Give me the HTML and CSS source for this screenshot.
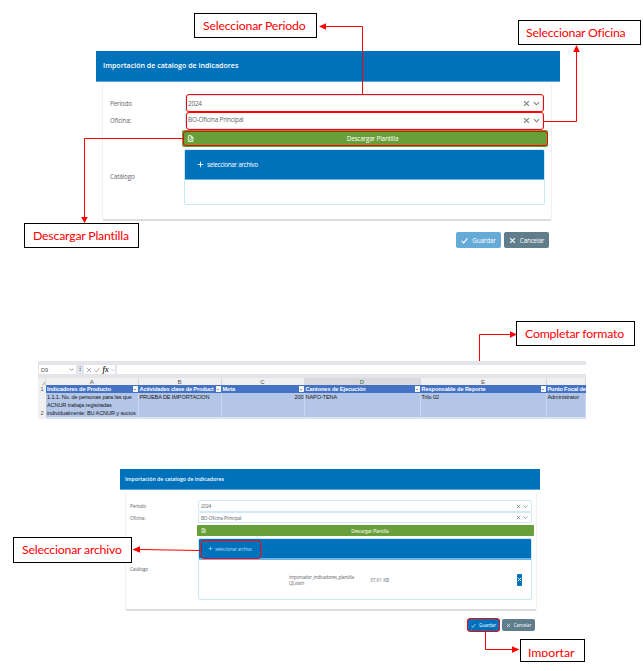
FILE: index.html
```html
<!DOCTYPE html>
<html lang="es">
<head>
<meta charset="utf-8">
<title>Importación de catalogo de indicadores</title>
<link rel="stylesheet" href="styles.css">
</head>
<body>
<svg class="defs" width="0" height="0">
  <symbol id="x" viewBox="0 0 8 8"><path d="M1.2 1.2 6.8 6.8M6.8 1.2 1.2 6.8"/></symbol>
  <symbol id="down" viewBox="0 0 8 8"><path d="M1 2.5 4 5.5 7 2.5"/></symbol>
  <symbol id="check" viewBox="0 0 8 8"><path d="M.8 4.5 3 6.7 7.4 1.5"/></symbol>
  <symbol id="plus" viewBox="0 0 8 8"><path d="M4 .8V7.2M.8 4H7.2"/></symbol>
  <symbol id="file" viewBox="0 0 8 8"><path d="M1.5.8H4.8L6.8 2.8V7.3H1.5ZM4.7.8V3H6.8M3 3.8 5.2 6.3M5.2 3.8 3 6.3"/></symbol>
</svg>
<main class="page">
  <section class="form form-lg">
    <header class="title"><span>Importación de catalogo de indicadores</span></header>
    <div class="card">
      <div class="row"><label>Periodo</label><div class="select"><span class="val-year">2024</span><svg><use href="#x"/></svg><svg><use href="#down"/></svg></div></div>
      <div class="row"><label>Oficina:</label><div class="select"><span class="val-office">BO-Oficina Principal</span><svg><use href="#x"/></svg><svg><use href="#down"/></svg></div></div>
      <div class="download"><svg><use href="#file"/></svg><span>Descargar Plantilla</span></div>
      <div class="row upload-row"><label>Catálogo</label>
        <div class="upload"><div class="upload-head"><svg><use href="#plus"/></svg><span>seleccionar archivo</span></div><div class="upload-body"></div></div>
      </div>
    </div>
    <footer><button class="save"><svg><use href="#check"/></svg><span>Guardar</span></button><button class="cancel"><svg><use href="#x"/></svg><span>Cancelar</span></button></footer>
  </section>

  <section class="sheet">
    <div class="formula">
      <div class="namebox"><span>D9</span><svg><use href="#down"/></svg></div>
      <i class="grip">⁝</i>
      <div class="fx"><svg><use href="#x"/></svg><svg><use href="#check"/></svg><em>fx</em><svg class="tiny"><use href="#down"/></svg></div>
      <div class="entry"></div>
    </div>
    <div class="grid letters"><b class="corner"></b><b>A</b><b>B</b><b>C</b><b class="active">D</b><b>E</b><b></b></div>
    <div class="grid heads"><b class="num">1</b>
      <div><span>Indicadores de Producto</span><i></i></div>
      <div><span class="tight">Actividades clave de Product</span><i></i></div>
      <div><span>Meta</span><i></i></div>
      <div><span>Cantones de Ejecución</span><i></i></div>
      <div><span>Responsable de Reporte</span><i></i></div>
      <div><span class="tight">Punto Focal de</span></div></div>
    <div class="grid data"><b class="num">2</b>
      <div>1.1.1. No. de personas para las que<br>ACNUR trabaja registradas<br>individualmente: BU ACNUR y socios</div>
      <div>PRUEBA DE IMPORTACION</div><div class="right">200</div><div>NAPO-TENA</div><div>Trilo 02</div><div>Administrator</div></div>
    <div class="grid next"><b></b><div></div><div></div><div></div><div></div><div></div><div></div></div>
  </section>

  <section class="form form-sm">
    <header class="title"><span>Importación de catalogo de indicadores</span></header>
    <div class="card">
      <div class="row"><label>Periodo</label><div class="select"><span class="val-year">2024</span><svg><use href="#x"/></svg><svg><use href="#down"/></svg></div></div>
      <div class="row"><label>Oficina:</label><div class="select"><span class="val-office">BO-Oficina Principal</span><svg><use href="#x"/></svg><svg><use href="#down"/></svg></div></div>
      <div class="download"><svg><use href="#file"/></svg><span>Descargar Plantilla</span></div>
      <div class="row upload-row"><label>Catálogo</label>
        <div class="upload"><div class="upload-head"><svg><use href="#plus"/></svg><span>seleccionar archivo</span></div>
          <div class="upload-body"><p>importador_indicadores_plantilla<br>(2).xlsm</p><p class="size">37.61 KB</p><button class="remove"><svg><use href="#x"/></svg></button></div></div>
      </div>
    </div>
    <footer><button class="save"><svg><use href="#check"/></svg><span>Guardar</span></button><button class="cancel"><svg><use href="#x"/></svg><span>Cancelar</span></button></footer>
  </section>

  <svg class="arrows" width="643" height="671" viewBox="0 0 643 671">
    <g class="line">
      <path d="M362.5 94V26.5H325"/><path d="M543 121.5H576.5V50"/><path d="M184 138.5H84.5V217"/>
      <path d="M479.5 361V334.5H511"/><path d="M200 550.5 140 549.5"/><path d="M485.5 631V649.5H513"/>
    </g>
    <g class="tip">
      <path d="M319 26.5 326 23.3V29.7Z"/><path d="M576.5 45 573.2 52H579.8Z"/><path d="M84.5 223 81.2 217H87.8Z"/>
      <path d="M517 334.5 510 331.3V337.7Z"/><path d="M132.500 549.5 140 546.3V552.7Z"/><path d="M519.500 649.5 512 646.3V652.7Z"/>
    </g>
  </svg>
  <div class="mark m-period"></div><div class="mark m-office"></div><div class="mark m-download"></div><div class="mark m-file"></div><div class="mark m-save"></div>
  <div class="note n-period"><span>Seleccionar Periodo</span></div>
  <div class="note n-office"><span>Seleccionar Oficina</span></div>
  <div class="note n-download"><span>Descargar Plantilla</span></div>
  <div class="note n-format"><span>Completar formato</span></div>
  <div class="note n-file"><span>Seleccionar archivo</span></div>
  <div class="note n-import"><span>Importar</span></div>
</main>
</body>
</html>
```
FILE: styles.css
```css
* { box-sizing: border-box; }
html, body { margin: 0; }
body { background: #fff; font-family: "Open Sans", sans-serif; color: #66686c; overflow: hidden; }
svg { fill: none; stroke: currentColor; stroke-width: 1; flex: none; }
span, label { white-space: nowrap; }
.defs { position: absolute; }
.page { position: relative; width: 643px; height: 671px; padding-top: 51px; overflow: hidden; }
button { border: 0; padding: 0; color: #fff; font-family: inherit; display: flex; align-items: center; justify-content: center; }

.form { display: flex; flex-direction: column; }
.title { background: #0072bc; color: #fff; display: flex; align-items: center; font-weight: 600; border-bottom: 1px solid #5ba6d8; }
.card { border: 1px solid #f1f1f2; border-bottom: 2px solid #dcdcde; border-top: 0; border-radius: 0 0 3px 3px; }
.row { display: flex; align-items: center; }
.select { flex: none; display: flex; align-items: center; border: 1px solid #cfeafc; border-radius: 2px; color: #606468; }
.select span { flex: 1; }
.select svg { color: #7c8085; }
.download { background: #689f38; color: #fff; border-radius: 2px; display: flex; align-items: center; }
.download span { flex: 1; text-align: center; }
.upload { border: 1px solid #c9e9fb; border-radius: 2px; overflow: hidden; }
.upload-head { background: #0072bc; color: #fff; display: flex; align-items: center; border-bottom: 1px solid #6cb5e3; }
.form footer { display: flex; }
.cancel { background: #607d8b; border-radius: 2px; }
.save { border-radius: 2px; }

.form-lg { width: 464px; margin-left: 96px; height: 198px; font-size: 6.4px; letter-spacing: -.2px; }
.form-lg .title { height: 31px; padding: 0 0 2px 7px; font-size: 7.1px; letter-spacing: 0; }
.form-lg .card { margin: 1px 8px 0 6px; height: 138px; padding: 12px 0 0 7px; }
.form-lg .row label { width: 75px; }
.form-lg .select { width: 358px; height: 17px; padding: 0 2px 0 2px; gap: 3px; }
.form-lg .select svg { width: 7px; height: 7px; stroke-width: 1.3; }
.form-lg .val-office { position: relative; top: -1px; }
.form-lg .download { margin: 1px 0 0 72px; width: 366px; height: 17px; padding-left: 5px; }
.form-lg .download span { padding-left: 3px; }
.form-lg .download svg { width: 7px; height: 7px; }
.form-lg .upload-row { margin-top: 1px; }
.form-lg .upload { width: 361px; height: 56px; margin: 1px 0 0 -1px; }
.form-lg .upload-head { height: 30px; padding-left: 12px; gap: 3px; letter-spacing: -.33px; font-weight: 500; }
.form-lg .upload-head svg { width: 7px; height: 7px; }
.form-lg footer { margin: 11px 0 0 360px; gap: 3px; }
.form-lg footer button { width: 45px; height: 16px; font-size: 6.3px; gap: 4px; letter-spacing: -.15px; }
.form-lg footer svg { width: 7px; height: 7px; stroke-width: 1.2; }
.form-lg .save { background: #66aad8; }

.sheet { width: 548px; margin: 112px 0 0 38px; height: 58px; font: 5.6px/8px "Liberation Sans", sans-serif; color: #15181d; overflow: hidden; }
.formula { height: 16px; background: #e5e4ea; padding: 4px 0 3px 1px; display: flex; }
.formula > div { background: #fff; display: flex; align-items: center; border-radius: 1px; }
.namebox { width: 37px; padding: 0 2px; justify-content: space-between; color: #555; }
.formula svg { width: 5px; height: 5px; color: #777; stroke-width: 1.3; }
.grip { width: 8px; text-align: center; font: 7px/9px "DejaVu Sans", sans-serif; }
.fx { width: 31px; padding: 0 0 0 2px; justify-content: space-between; }
.formula .fx svg { width: 6px; height: 6px; color: #a8a8ac; }
.fx em { font: italic 700 7.5px/8px "Liberation Serif", serif; color: #333; }
.formula .fx svg.tiny { width: 4px; height: 4px; }
.entry { flex: 1; margin-left: 2px; }
.grid { display: grid; grid-template-columns: 8px 92.5px 83px 83px 116px 126px 39.5px; }
.grid b { text-align: center; font-weight: 400; background: #f0f0f1; color: #555; }
.letters { height: 8px; border-top: 1px solid #e3e3e8; line-height: 8px; }
.letters b { border-right: 1px solid #d8d8da; font-size: 6px; }
.letters .active { background: #d9dadb; color: #217346; border-bottom: 1px solid #217346; }
.grid .corner { background: linear-gradient(135deg, #f0f0f1 65%, #c7c7c8 65%); }
.heads { height: 8px; }
.heads div { background: #4472c4; color: #fff; font-weight: 700; letter-spacing: -.07px; display: flex; justify-content: space-between; align-items: center; padding: 0 0 0 1px; white-space: nowrap; }
.heads i { width: 5px; height: 6px; background: #f5f6f8; display: flex; align-items: center; justify-content: center; flex: none; margin-right: 1px; }
.heads i::after { content: ""; border: 1px solid transparent; border-top-color: #555; margin-top: 1px; }
.heads .tight { letter-spacing: -.13px; }
.data { height: 24px; letter-spacing: -.12px; }
.data div { background: #b4c6e7; border-right: 1px solid #cad7ee; padding-left: 1px; white-space: nowrap; }
.data .right { text-align: right; }
.data .num { display: flex; align-items: flex-end; justify-content: center; }
.next { height: 2px; }
.next div { background: #d9e1f2; }

.form-sm { width: 420px; margin: 50px 0 0 120px; font-size: 4.7px; letter-spacing: -.16px; }
.form-sm .title { height: 21px; padding: 0 0 1px 5px; font-size: 5.2px; letter-spacing: 0; }
.form-sm .card { margin: 2px 3px 0 5px; height: 119px; padding: 8px 0 0 4px; }
.form-sm .row label { width: 68px; }
.form-sm .select { width: 334px; height: 12px; padding: 0 3px 0 2px; gap: 2px; }
.form-sm .select svg { width: 5px; height: 5px; stroke-width: 1.2; }
.form-sm .row:nth-child(2) .select { height: 11px; }
.form-sm .download { margin: 2px 0 0 67px; width: 337px; height: 11px; padding-left: 4px; border-radius: 1px; }
.form-sm .download svg { width: 5px; height: 5px; }
.form-sm .upload-row { margin-top: 2px; }
.form-sm .upload { width: 334px; height: 62px; }
.form-sm .upload-head { height: 21px; padding-left: 9px; gap: 2px; color: #b5d7ee; border-bottom-width: 2px; letter-spacing: -.26px; }
.form-sm .upload-head svg { width: 5px; height: 5px; }
.upload-body { display: flex; align-items: center; }
.form-sm .upload-body { height: 39px; padding-left: 90px; }
.upload-body p { margin: 0; line-height: 6px; width: 81px; white-space: nowrap; letter-spacing: -.22px; }
.upload-body .size { letter-spacing: 0; }
.remove { background: #0072bc; width: 5px; height: 12px; border-radius: 1px; margin-left: 66px; }
.remove svg { width: 5px; height: 5px; stroke-width: 1.4; }
.form-sm footer { margin: 8px 0 0 347px; gap: 2px; }
.form-sm footer button { width: 33px; height: 12px; font-size: 4.5px; gap: 3px; letter-spacing: -.1px; }
.form-sm footer svg { width: 5px; height: 5px; }
.form-sm .save { background: #0072bc; }

.arrows { position: absolute; left: 0; top: 0; stroke: none; }
.line { stroke: #f00; }
.tip { fill: #f00; }
.mark { position: absolute; border: 1px solid #f00; border-radius: 3px; }
.m-period { left: 186px; top: 94px; width: 358px; height: 18px; }
.m-office { left: 186px; top: 112px; width: 358px; height: 18px; }
.m-download { left: 183px; top: 131px; width: 365px; height: 15px; }
.m-file { left: 201px; top: 540px; width: 60px; height: 19px; }
.m-save { left: 467px; top: 618px; width: 33px; height: 14px; }
.note { position: absolute; border: 1px solid #000; background: #fff; color: #f00; font: 12.3px/23px Lato, sans-serif; letter-spacing: -.2px; height: 25px; }
.note span { display: block; }
.n-period { left: 194px; top: 13px; width: 123px; padding-left: 8px; }
.n-office { left: 518px; top: 20px; width: 123px; padding-left: 7px; }
.n-download { left: 24px; top: 223px; width: 115px; padding-left: 8px; }
.n-format { left: 516px; top: 321px; width: 119px; padding-left: 8px; }
.n-file { left: 13px; top: 537px; width: 119px; height: 26px; padding-left: 8px; }
.n-import { left: 520px; top: 639px; width: 65px; height: 23px; padding-left: 7px; letter-spacing: -.05px; }
.n-import span { height: 17px; overflow: hidden; line-height: 25px; }
```
